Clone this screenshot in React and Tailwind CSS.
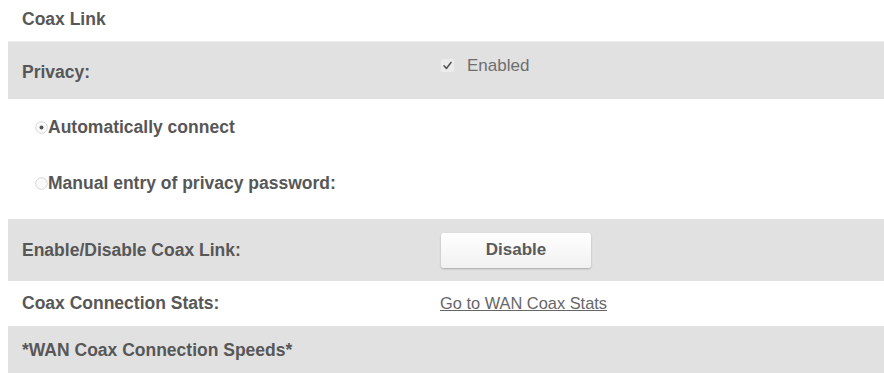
import React from 'react';

// Settings page: Coax Link section
const label = "font-bold text-[17.5px] text-[#575757]";

function CheckMark() {
  return (
    <svg width="15" height="15" viewBox="0 0 15 15" className="mr-[12px]">
      <rect x="0.5" y="0.5" width="14" height="14" rx="2" fill="#ececec" stroke="#e2e2e2" />
      <path d="M4 7.8 L6.4 10.4 L11 4.4" fill="none" stroke="#555" strokeWidth="1.6" strokeLinecap="round" strokeLinejoin="round" />
    </svg>
  );
}

function Radio({ checked }) {
  return (
    <svg width="13" height="13" viewBox="0 0 13 13">
      <circle cx="6.5" cy="6.5" r="5.8" fill="#fafafa" stroke="#d6d6d6" strokeWidth="1" />
      {checked && <circle cx="6.5" cy="6.5" r="2" fill="#555" />}
    </svg>
  );
}

export default function App() {
  return (
    <div className="w-[884px] h-[373px] bg-white pl-[8px] overflow-hidden" style={{ fontFamily: '"Liberation Sans", Arial, sans-serif' }}>
      <div className="h-[41px] flex items-center pl-[14px] pb-[3px]">
        <span className={label}>Coax Link</span>
      </div>

      <div className="h-[58px] bg-[#e1e1e1] flex border-t border-[#ededed]">
        <div className="w-[432px] pl-[14px] flex items-center pt-[4px]">
          <span className={label}>Privacy:</span>
        </div>
        <div className="flex items-center pt-[11px] self-start">
          <CheckMark />
          <span className="text-[17px] text-[#6e6e6e]">Enabled</span>
        </div>
      </div>

      <div className="h-[120px] pl-[27px]">
        <div className="h-[56px] flex items-center">
          <Radio checked />
          <span className={label}>Automatically connect</span>
        </div>
        <div className="h-[56px] flex items-center">
          <Radio />
          <span className={label}>Manual entry of privacy password:</span>
        </div>
      </div>

      <div className="h-[62px] bg-[#e1e1e1] flex items-center">
        <div className="w-[433px] pl-[14px]">
          <span className={label}>Enable/Disable Coax Link:</span>
        </div>
        <button className="w-[150px] h-[35px] rounded-[3px] bg-gradient-to-b from-white to-[#f1f1f1] shadow-[0_1px_2px_rgba(0,0,0,0.25)] text-[17px] font-bold text-[#5a5a5a]">
          Disable
        </button>
      </div>

      <div className="h-[45px] flex items-center">
        <div className="w-[432px] pl-[14px]">
          <span className={label}>Coax Connection Stats:</span>
        </div>
        <a className="text-[16.4px] text-[#666] underline">Go to WAN Coax Stats</a>
      </div>

      <div className="h-[47px] bg-[#e1e1e1] flex items-center pl-[14px] pt-[2px]">
        <span className={label}>*WAN Coax Connection Speeds*</span>
      </div>
    </div>
  );
}
